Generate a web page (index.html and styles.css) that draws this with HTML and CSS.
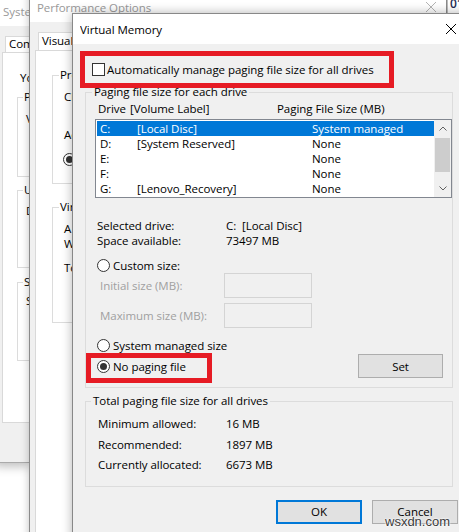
FILE: index.html
```html
<!DOCTYPE html>
<html lang="en">
<head>
<meta charset="utf-8">
<title>Virtual Memory</title>
<link rel="stylesheet" href="styles.css">
</head>
<body>
  <div class="win sys">
    <div class="titlebar"><span class="title">System Properties</span></div>
    <div class="tabstrip"><div class="tab">Computer Name</div></div>
    <div class="panel">
      <div class="you">You must be logged on as an Administrator to make most of these changes.</div>
      <div class="bgroup sg1">
        <div class="lg">Performance</div>
        <div class="bl">Visual effects, processor scheduling, memory usage, and virtual memory</div>
      </div>
      <div class="bgroup sg2">
        <div class="lg">User Profiles</div>
        <div class="bl">Desktop settings related to your sign-in</div>
      </div>
      <div class="bgroup sg3">
        <div class="lg">Startup and Recovery</div>
        <div class="bl">System startup, system failure, and debugging information</div>
      </div>
    </div>
    <div class="footer"></div>
  </div>

  <div class="win perf">
    <div class="titlebar">
      <span class="title">Performance Options</span>
      <span class="close close-sm"><svg width="10" height="10" viewBox="0 0 10 10"><path class="xline dim" d="M0 0L10 10M10 0L0 10"/></svg></span>
    </div>
    <div class="tabstrip"><div class="tab tab-pf">Visual Effects</div></div>
    <div class="panel">
      <div class="bgroup pg1">
        <div class="lg">Processor scheduling</div>
        <div class="pl1">Choose how to allocate processor resources.</div>
        <div class="pl2">Adjust for best performance of:</div>
        <div class="pradio"><span class="radio on"></span>Programs</div>
      </div>
      <div class="bgroup pg2">
        <div class="lg">Virtual memory</div>
        <div class="pl3">A paging file is an area on the hard disk that<br>Windows uses as if it were RAM.</div>
        <div class="pl4">Total paging file size for all drives:</div>
      </div>
    </div>
  </div>

  <div class="corner">01</div>

  <div class="win vm">
    <div class="titlebar">
      <span class="title">Virtual Memory</span>
      <span class="close close-lg"><svg width="10" height="10" viewBox="0 0 10 10"><path class="xline" d="M0 0L10 10M10 0L0 10"/></svg></span>
    </div>
    <div class="vm-body">
      <div class="auto"><span class="check"></span><span>Automatically manage paging file size for all drives</span></div>

      <div class="group g1">
        <div class="legend">Paging file size for each drive</div>
        <div class="lhead"><span>Drive</span><span>[Volume Label]</span><span>Paging File Size (MB)</span></div>
        <div class="list">
          <div class="rows">
            <div class="row sel"><span>C:</span><span>[Local Disc]</span><span>System managed</span></div>
            <div class="row"><span>D:</span><span>[System Reserved]</span><span>None</span></div>
            <div class="row"><span>E:</span><span></span><span>None</span></div>
            <div class="row"><span>F:</span><span></span><span>None</span></div>
            <div class="row"><span>G:</span><span>[Lenovo_Recovery]</span><span>None</span></div>
          </div>
          <div class="sb">
            <div class="arrow"><svg width="8" height="5" viewBox="0 0 8 5"><path class="chev" d="M0.5 4.5L4 1L7.5 4.5"/></svg></div>
            <div class="thumb"></div>
            <div class="track"></div>
            <div class="arrow"><svg width="8" height="5" viewBox="0 0 8 5"><path class="chev" d="M0.5 0.5L4 4L7.5 0.5"/></svg></div>
          </div>
        </div>
        <div class="info first"><span>Selected drive:</span><span>C:&nbsp;&nbsp;[Local Disc]</span></div>
        <div class="info"><span>Space available:</span><span>73497 MB</span></div>
        <div class="opt custom"><span class="radio"></span><span>Custom size:</span></div>
        <div class="field"><span class="fl">Initial size (MB):</span><span class="tb"></span></div>
        <div class="field second"><span class="fl">Maximum size (MB):</span><span class="tb"></span></div>
        <div class="opt sysman"><span class="radio"></span><span>System managed size</span></div>
        <div class="lastrow">
          <div class="opt"><span class="radio on"></span><span>No paging file</span></div>
          <button class="btn set">Set</button>
        </div>
      </div>

      <div class="group g2">
        <div class="legend">Total paging file size for all drives</div>
        <div class="totals">
          <div class="info2"><span>Minimum allowed:</span><span>16 MB</span></div>
          <div class="info2"><span>Recommended:</span><span>1897 MB</span></div>
          <div class="info2"><span>Currently allocated:</span><span>6673 MB</span></div>
        </div>
      </div>

      <div class="buttons">
        <button class="btn ok">OK</button>
        <button class="btn">Cancel</button>
      </div>
    </div>
    <div class="redbox r1"></div>
    <div class="redbox r2"></div>
  </div>

  <div class="mark">wsxdn.com</div>
</body>
</html>
```

FILE: styles.css
```css
* { box-sizing: border-box; }
html, body { margin: 0; padding: 0; }
body {
  width: 459px;
  height: 532px;
  overflow: hidden;
  position: relative;
  background: #fff;
  font-family: "Open Sans", "Noto Sans", sans-serif;
  font-size: 11.5px;
  letter-spacing: -0.05px;
  line-height: 15px;
  color: #000;
}

/* generic window */
.win { position: absolute; background: #f0f0f0; display: flex; flex-direction: column; }
.titlebar { flex: none; height: 30px; background: #fff; display: flex; align-items: center; white-space: nowrap; }
.title { flex: 1; overflow: hidden; }
.close { flex: none; height: 30px; display: flex; align-items: center; justify-content: center; }
.close-sm { width: 30px; }
.close-lg { width: 46px; }
.xline { stroke: #000; stroke-width: 1; fill: none; }
.xline.dim { stroke: #b4b4b4; }

.tabstrip { flex: none; display: flex; }
.tab {
  height: 16px;
  padding: 0 6px 0 3px;
  border: 1px solid #d9d9d9;
  border-bottom: none;
  background: #fff;
  line-height: 14px;
  white-space: nowrap;
}
.panel {
  background: #fff;
  border: 1px solid #d9d9d9;
  display: flex;
  flex-direction: column;
  align-items: flex-start;
  white-space: nowrap;
}
.bgroup { border: 1px solid #dcdcdc; }
.bgroup .lg { display: table; margin: -9px 0 0 5px; padding: 0 1px; background: #fff; }

/* System Properties (back) — only its left strip is visible */
.sys {
  left: -6px; top: -5px; width: 36px; height: 468px;
  border: 1px solid #aaa;
  overflow: hidden;
  box-shadow: 0 3px 10px rgba(0, 0, 0, 0.28);
}
.sys .titlebar { padding-left: 8px; color: #999; }
.sys .tabstrip { margin: 10px 0 0 10px; }
.sys .panel { flex: none; margin-left: 7px; width: 460px; height: 371px; padding-left: 14px; }
.you { margin: 17px 0 0 3px; }
.sys .bgroup { width: 420px; }
.sg1 { margin-top: 12px; height: 80px; }
.sg2 { margin-top: 13px; height: 78px; }
.sg3 { margin-top: 14px; height: 79px; }
.sg1 .bl { margin: 7px 0 0 8px; }
.sg2 .bl { margin: 6px 0 0 8px; }
.sg3 .bl { margin: 4px 0 0 8px; }
.footer { flex: 1; }

/* Performance Options (middle) */
.perf {
  left: 29px; top: -9px; width: 418px; height: 560px;
  border: 1px solid #8a8a8a;
  box-shadow: 0 0 8px rgba(0, 0, 0, 0.25);
}
.perf .titlebar { padding-left: 7px; color: #999; }
.perf .tabstrip { margin: 10px 0 0 8px; }
.tab-pf { height: 18px; line-height: 16px; }
.perf .panel {
  flex: 1;
  align-self: flex-start;
  width: 38px;
  margin-left: 5px;
  padding-left: 16px;
  border-right: none;
  overflow: hidden;
}
.perf .bgroup { flex: none; width: 380px; }
.perf .bgroup .lg { margin-left: 6px; }
.pg1 { margin-top: 24px; height: 109px; }
.pg2 { margin-top: 23px; height: 116px; }
.pl1 { margin: 7px 0 0 11px; }
.pl2 { margin: 23px 0 0 11px; }
.pradio { margin: 10px 0 0 10px; display: flex; align-items: center; gap: 3px; height: 15px; }
.pl3 { margin: 7px 0 0 11px; }
.pl4 { margin: 9px 0 0 11px; }

.corner {
  position: absolute; left: 447px; top: -4px; width: 12px; height: 17px;
  background: #fff; border-left: 1px solid #bbb;
  padding-left: 2px; font-size: 12px; font-weight: 600; color: #1d2b52;
  overflow: hidden; white-space: nowrap;
}

/* Virtual Memory (front) */
.vm {
  left: 72px; top: 13px; width: 403px; height: 530px;
  border: 1px solid #888;
  box-shadow: 0 0 10px rgba(0, 0, 0, 0.3);
}
.vm .titlebar { padding-left: 7px; }
.vm-body { flex: 1; padding: 0 16px 0 12px; display: flex; flex-direction: column; white-space: nowrap; }

.auto { display: flex; align-items: center; gap: 2px; height: 15px; margin: 18px 0 0 7px; }
.check { width: 13px; height: 13px; border: 1px solid #333; background: #fff; }

.group { border: 1px solid #dcdcdc; margin-right: 5px; display: flex; flex-direction: column; }
.legend { align-self: flex-start; margin: -9px 0 0 -3px; padding: 0 2px; background: #f0f0f0; }
.g1 { margin-top: 15px; padding: 0 0 9px 9px; }

.lhead { display: grid; grid-template-columns: 32px 147px auto; margin: 2px 0 0 3px; }
.list { display: flex; height: 79px; margin-top: 3px; border: 1px solid #828790; background: #fff; }
.rows { flex: 1; padding: 1px 0 1px 1px; }
.row { display: grid; grid-template-columns: 37px 175px auto; height: 15px; padding-left: 3px; }
.row.sel { background: #0078d7; color: #fff; }
.sb { width: 17px; display: flex; flex-direction: column; background: #f0f0f0; }
.arrow { height: 17px; display: flex; align-items: center; justify-content: center; }
.chev { fill: none; stroke: #606060; stroke-width: 1; }
.thumb { height: 34px; margin: 1px 1px 0; background: #cdcdcd; }
.track { flex: 1; }

.info { display: grid; grid-template-columns: 129px auto; margin-left: 2px; }
.info.first { margin-top: 20px; }

.opt { display: flex; align-items: center; gap: 3px; height: 15px; margin-left: 2px; }
.custom { margin-top: 10px; }
.sysman { margin-top: 10px; }
.radio {
  flex: none;
  width: 13px; height: 13px; border: 1px solid #333; border-radius: 50%; background: #fff;
  display: flex; align-items: center; justify-content: center;
}
.radio.on::after { content: ""; width: 7px; height: 7px; border-radius: 50%; background: #333; }

.field { display: flex; align-items: center; height: 25px; margin-left: 5px; color: #a0a0a0; }
.field.second { margin-top: 5px; }
.fl { width: 124px; }
.tb { width: 88px; height: 25px; border: 1px solid #d4d4d4; background: #f0f0f0; }

.lastrow { display: flex; align-items: center; justify-content: space-between; height: 24px; margin: 1px 9px 0 0; }
.btn {
  font: inherit; letter-spacing: inherit; color: #000;
  height: 24px; padding: 0;
  background: #e1e1e1; border: 1px solid #adadad;
}
.set { width: 85px; }

.g2 { margin-top: 13px; padding: 0 0 10px 12px; }
.g2 .legend { margin-left: -7px; }
.totals { margin-top: 6px; line-height: 20.5px; }
.info2 { display: grid; grid-template-columns: 128px auto; }

.buttons { display: flex; justify-content: flex-end; gap: 10px; margin-top: 13px; }
.buttons .btn { width: 86px; }
.btn.ok { border: 2px solid #0078d7; }

.redbox { position: absolute; border: 5px solid #e61b24; }
.r1 { left: 7px; top: 37px; width: 314px; height: 37px; }
.r2 { left: 13px; top: 339px; width: 126px; height: 30px; }

.mark {
  position: absolute; left: 385px; top: 514px;
  font-family: "Liberation Sans", Arial, sans-serif; font-size: 13px; letter-spacing: 0;
  color: #3a3a3a;
  text-shadow: 0 0 2px #fff, 0 0 2px #fff, 0 0 1px #fff;
}
```
